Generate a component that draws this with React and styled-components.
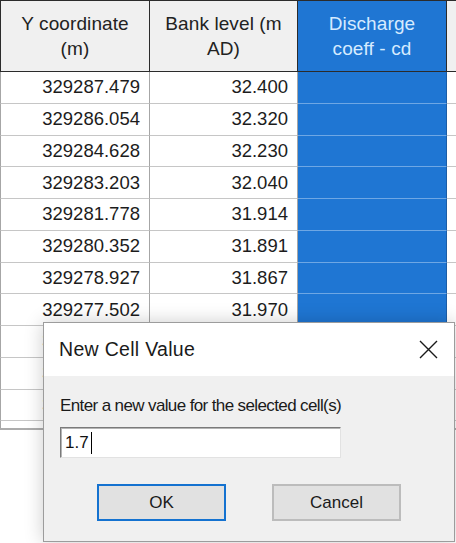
import React from 'react';
import styled, { createGlobalStyle } from 'styled-components';

const GlobalStyle = createGlobalStyle`
  html, body {
    margin: 0;
    padding: 0;
    background: #ffffff;
  }
`;

const rows = [
  ['329287.479', '32.400'],
  ['329286.054', '32.320'],
  ['329284.628', '32.230'],
  ['329283.203', '32.040'],
  ['329281.778', '31.914'],
  ['329280.352', '31.891'],
  ['329278.927', '31.867'],
  ['329277.502', '31.970'],
  ['329276.077', '31.950'],
  ['329274.651', '31.902'],
  ['329273.226', '31.884'],
  ['329271.801', '31.860'],
];

const Page = styled.div`
  position: relative;
  width: 456px;
  height: 543px;
  overflow: hidden;
  background: #ffffff;
  font-family: "Liberation Sans", Arial, sans-serif;
  color: #1c1c1c;
`;

const Grid = styled.div`
  display: grid;
  grid-template-columns: 150px 148px 149px 1fr;
  grid-template-rows: 72px;
  grid-auto-rows: 31.75px;
  height: 428px;
  overflow: hidden;
  border-bottom: 2px solid #acacac;
`;

const HeaderCell = styled.div`
  display: flex;
  align-items: center;
  justify-content: center;
  text-align: center;
  box-sizing: border-box;
  font-size: 19px;
  letter-spacing: 0.1px;
  line-height: 25px;
  padding: 0 4px;
  background: ${(p) => (p.$selected ? '#1f76d3' : '#f0f0f0')};
  color: ${(p) => (p.$selected ? '#d6ebff' : '#222222')};
  border-top: 1px solid #2b2b2b;
  border-bottom: 1px solid #2b2b2b;
  border-right: 1px solid #2b2b2b;
  border-left: ${(p) => (p.$first ? '1px solid #2b2b2b' : 'none')};
`;

const Cell = styled.div`
  display: flex;
  align-items: center;
  justify-content: flex-end;
  box-sizing: border-box;
  padding-right: 9px;
  font-size: 18.5px;
  white-space: nowrap;
  background: ${(p) => (p.$selected ? '#1f76d3' : '#ffffff')};
  border-bottom: 1px solid ${(p) => (p.$selected ? '#6ea7e4' : '#c6c6c6')};
  border-right: 1px solid ${(p) => (p.$selected ? '#1c5da6' : '#a6a6a6')};
  border-left: ${(p) => (p.$first ? '1px solid #a6a6a6' : 'none')};
`;

const Dialog = styled.div`
  position: absolute;
  left: 43px;
  top: 322px;
  width: 412px;
  height: 220px;
  box-sizing: border-box;
  border: 1px solid #9c9c9c;
  background: #f0f0f0;
  box-shadow: 0 0 18px rgba(0, 0, 0, 0.2);
  display: flex;
  flex-direction: column;
`;

const TitleBar = styled.div`
  height: 53px;
  background: #ffffff;
  display: flex;
  align-items: center;
  justify-content: space-between;
  padding: 0 16px 0 15px;
`;

const Title = styled.span`
  font-size: 19.5px;
  letter-spacing: 0.3px;
  color: #1a1a1a;
`;

const CloseButton = styled.div`
  width: 20px;
  height: 20px;
  display: flex;
  align-items: center;
  justify-content: center;
`;

const Body = styled.div`
  display: flex;
  flex-direction: column;
  padding: 20px 16px 0 16px;
`;

const Label = styled.div`
  font-size: 17px;
  letter-spacing: -0.62px;
  line-height: 20px;
  color: #1a1a1a;
`;

const InputBox = styled.div`
  margin-top: 11px;
  width: 281px;
  height: 31px;
  box-sizing: border-box;
  background: #ffffff;
  border: 1px solid;
  border-color: #7a7a7a #e2e2e2 #e2e2e2 #7a7a7a;
  box-shadow: inset 1px 1px 0 #b4b4b4;
  display: flex;
  align-items: center;
  padding-left: 4px;
  font-size: 17px;
  color: #111111;
`;

const Caret = styled.span`
  display: inline-block;
  width: 1px;
  height: 22px;
  margin-left: 2px;
  background: #000000;
`;

const ButtonRow = styled.div`
  display: flex;
  gap: 46px;
  margin-top: 26px;
  padding-left: 37px;
`;

const Button = styled.div`
  width: 129px;
  height: 37px;
  box-sizing: border-box;
  display: flex;
  align-items: center;
  justify-content: center;
  background: #e1e1e1;
  font-size: 17px;
  color: #1a1a1a;
  border: 2px solid ${(p) => (p.$default ? '#1472d0' : '#bcbcbc')};
`;

export default function App() {
  return (
    <Page>
      <GlobalStyle />
      <Grid>
        <HeaderCell $first>Y coordinate<br />(m)</HeaderCell>
        <HeaderCell>Bank level (m<br />AD)</HeaderCell>
        <HeaderCell $selected>Discharge<br />coeff - cd</HeaderCell>
        <HeaderCell />
        {rows.map(([y, bank]) => (
          <React.Fragment key={y}>
            <Cell $first>{y}</Cell>
            <Cell>{bank}</Cell>
            <Cell $selected />
            <Cell />
          </React.Fragment>
        ))}
      </Grid>

      <Dialog>
        <TitleBar>
          <Title>New Cell Value</Title>
          <CloseButton>
            <svg width="19" height="19" viewBox="0 0 19 19">
              <path d="M1 1 L18 18 M18 1 L1 18" stroke="#1a1a1a" strokeWidth="1.4" fill="none" />
            </svg>
          </CloseButton>
        </TitleBar>
        <Body>
          <Label>Enter a new value for the selected cell(s)</Label>
          <InputBox>
            1.7
            <Caret />
          </InputBox>
          <ButtonRow>
            <Button $default>OK</Button>
            <Button>Cancel</Button>
          </ButtonRow>
        </Body>
      </Dialog>
    </Page>
  );
}
